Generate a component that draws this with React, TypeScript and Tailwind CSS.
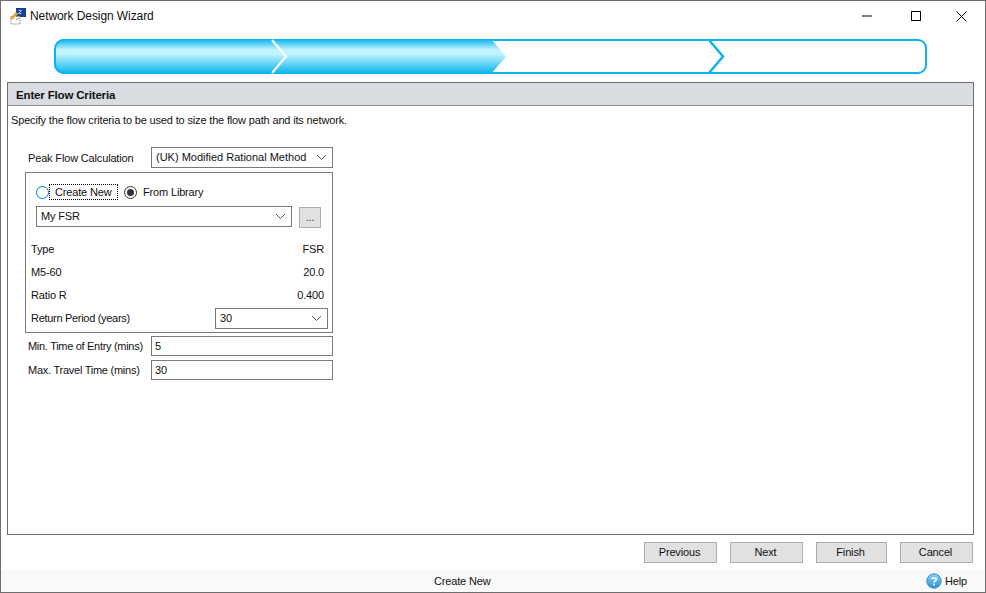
import React from "react";

function Chevron() {
  return (
    <svg width="11" height="7" viewBox="0 0 11 7" className="shrink-0">
      <path d="M1 1l4.5 4.5L10 1" fill="none" stroke="#555" strokeWidth="1" />
    </svg>
  );
}

function Select({ value, className }: { value: string; className: string }) {
  return (
    <div className={`flex items-center justify-between border border-[#7a7a7a] bg-white pl-[4px] pr-[5px] ${className}`}>
      <span>{value}</span>
      <Chevron />
    </div>
  );
}

function InfoRow({ label, value }: { label: string; value: string }) {
  return (
    <div className="flex h-[23px] items-center justify-between pl-[5px] pr-[8px]">
      <span>{label}</span>
      <span>{value}</span>
    </div>
  );
}

function Btn({ label, w }: { label: string; w: string }) {
  return (
    <div className={`flex h-[21px] items-center justify-center border border-[#adadad] bg-[#e1e1e1] pr-[2px] ${w}`}>{label}</div>
  );
}

function Progress() {
  return (
    <svg width="874" height="35" viewBox="0 0 874 35" className="block">
      <defs>
        <linearGradient id="g" x1="0" y1="0" x2="0" y2="1">
          <stop offset="0" stopColor="#05b2ee" />
          <stop offset="0.3" stopColor="#bff3fe" />
          <stop offset="0.42" stopColor="#c4f5ff" />
          <stop offset="1" stopColor="#05b2ee" />
        </linearGradient>
      </defs>
      <path d="M10 1H864a8 8 0 0 1 8 8V26a8 8 0 0 1-8 8H10" fill="#fff" stroke="#0ab4ee" strokeWidth="2" />
      <path d="M10 0H437L452 17.5L437 35H10A10 10 0 0 1 0 25V10A10 10 0 0 1 10 0Z" fill="url(#g)" />
      <path d="M1 10V25A9 9 0 0 0 10 34M1 10A9 9 0 0 1 10 1" fill="none" stroke="#0ab4ee" strokeWidth="2" />
      <path d="M218 1L232 17.5L218 34" fill="none" stroke="#fff" strokeWidth="2" />
      <path d="M655 1L669 17.5L655 34" fill="none" stroke="#0ab4ee" strokeWidth="2.5" />
    </svg>
  );
}

function AppIcon() {
  return (
    <svg width="18" height="18" viewBox="0 0 18 18" className="shrink-0">
      <rect x="7" y="1" width="10" height="9" fill="#1b3f8f" />
      <path d="M9.5 3.5h3l-3 3h3" fill="none" stroke="#8fd4f5" strokeWidth="1" />
      <rect x="2" y="9.5" width="9" height="7.5" fill="#fff" stroke="#8a8a8a" strokeWidth="1" strokeDasharray="1.5 1" />
      <path d="M2 12L8 6" stroke="#e2a93b" strokeWidth="3" />
      <path d="M7 13l3-2" stroke="#888" strokeWidth="1" />
    </svg>
  );
}

function HelpIcon() {
  return (
    <svg width="16" height="16" viewBox="0 0 16 16" className="shrink-0">
      <defs>
        <linearGradient id="h" x1="0" y1="0" x2="0" y2="1">
          <stop offset="0" stopColor="#8fd0f2" />
          <stop offset="1" stopColor="#2a8fd6" />
        </linearGradient>
      </defs>
      <circle cx="8" cy="8" r="7.2" fill="url(#h)" stroke="#3a8ec8" strokeWidth="1" />
      <path d="M5.5 6.2C5.6 4.6 10.4 4.4 10.4 6.5C10.4 8 8 7.8 8 9.4" fill="none" stroke="#fff" strokeWidth="1.6" />
      <rect x="7.1" y="10.6" width="1.8" height="1.8" fill="#fff" />
    </svg>
  );
}

export default function App() {
  return (
    <div className="flex h-[593px] w-[986px] flex-col border border-[#6e6e6e] bg-white font-['Liberation_Sans',Arial,sans-serif] text-[11px] leading-[13px] tracking-[-0.16px] text-[#111]">
      {/* title bar */}
      <div className="flex h-[30px] items-center pl-[8px]">
        <AppIcon />
        <span className="ml-[3px] text-[12px] tracking-[-0.08px]">Network Design Wizard</span>
        <div className="ml-auto flex items-center">
          <svg width="10" height="2" viewBox="0 0 10 2" className="mr-[39px]"><rect width="10" height="1" y="0.5" fill="#000" /></svg>
          <svg width="10" height="10" viewBox="0 0 10 10" className="mr-[35px]"><rect x="0.5" y="0.5" width="9" height="9" fill="none" stroke="#000" /></svg>
          <svg width="11" height="11" viewBox="0 0 11 11" className="mr-[18px]"><path d="M.5.5l10 10M10.5.5l-10 10" stroke="#000" /></svg>
        </div>
      </div>

      {/* progress */}
      <div className="pl-[53px] pt-[8px]">
        <Progress />
      </div>

      {/* panel */}
      <div className="ml-[6px] mt-[8px] h-[453px] w-[967px] border border-[#6e6e6e]">
        <div className="flex h-[23px] items-center border-b border-[#8b8f93] bg-[#d9dde1] pl-[8px] pt-[3px] text-[11.5px] font-bold">
          Enter Flow Criteria
        </div>
        <div className="mt-[8px] h-[13px] pl-[3px]">Specify the flow criteria to be used to size the flow path and its network.</div>

        <div className="ml-[17px] mt-[20px] w-[308px]">
          <div className="flex h-[21px] items-center">
            <span className="ml-[3px] w-[123px] pt-[2px]">Peak Flow Calculation</span>
            <Select value="(UK) Modified Rational Method" className="h-[21px] w-[182px] tracking-[0px]" />
          </div>

          <div className="mt-[4px] h-[161px] border border-[#7a7a7a]">
            <div className="flex h-[33px] items-center pl-[10px] pt-[5px]">
              <span className="h-[13px] w-[13px] rounded-full border border-[#0078d7] bg-white" />
              <span className="flex h-[16px] w-[69px] items-center border border-dotted border-black pl-[5px]">Create New</span>
              <span className="ml-[6px] flex h-[13px] w-[13px] items-center justify-center rounded-full border border-[#333]">
                <span className="h-[7px] w-[7px] rounded-full bg-[#333]" />
              </span>
              <span className="ml-[6px]">From Library</span>
            </div>
            <div className="flex items-start pl-[10px]">
              <Select value="My FSR" className="h-[21px] w-[256px]" />
              <div className="ml-[7px] mt-[1px] flex h-[21px] w-[22px] items-end justify-center border border-[#adadad] bg-[#e1e1e1] pb-[3px] text-[#333]">...</div>
            </div>
            <div className="pt-[10px]">
              <InfoRow label="Type" value="FSR" />
              <InfoRow label="M5-60" value="20.0" />
              <InfoRow label="Ratio R" value="0.400" />
              <div className="flex h-[23px] items-center justify-between pl-[5px] pr-[4px]">
                <span className="tracking-[-0.3px]">Return Period (years)</span>
                <Select value="30" className="h-[21px] w-[113px]" />
              </div>
            </div>
          </div>

          <div className="mt-[3px] flex h-[20px] items-center whitespace-nowrap">
            <span className="ml-[3px] w-[123px] tracking-[-0.3px]">Min. Time of Entry (mins)</span>
            <div className="flex h-[20px] w-[182px] items-center border border-[#7a7a7a] pl-[3px]">5</div>
          </div>
          <div className="mt-[4px] flex h-[20px] items-center whitespace-nowrap">
            <span className="ml-[3px] w-[123px] tracking-[-0.25px]">Max. Travel Time (mins)</span>
            <div className="flex h-[20px] w-[182px] items-center border border-[#7a7a7a] pl-[3px]">30</div>
          </div>
        </div>
      </div>

      {/* buttons */}
      <div className="mt-[7px] flex pl-[643px]">
        <Btn label="Previous" w="w-[73px]" />
        <div className="ml-[13px]"><Btn label="Next" w="w-[73px]" /></div>
        <div className="ml-[13px]"><Btn label="Finish" w="w-[71px]" /></div>
        <div className="ml-[13px]"><Btn label="Cancel" w="w-[73px]" /></div>
      </div>

      {/* footer */}
      <div className="mt-[7px] flex h-[22px] items-center bg-[#f9f9f9]">
        <span className="ml-[433px]">Create New</span>
        <div className="ml-auto mr-[18px] flex items-center gap-[3px]">
          <HelpIcon />
          <span>Help</span>
        </div>
      </div>
    </div>
  );
}
